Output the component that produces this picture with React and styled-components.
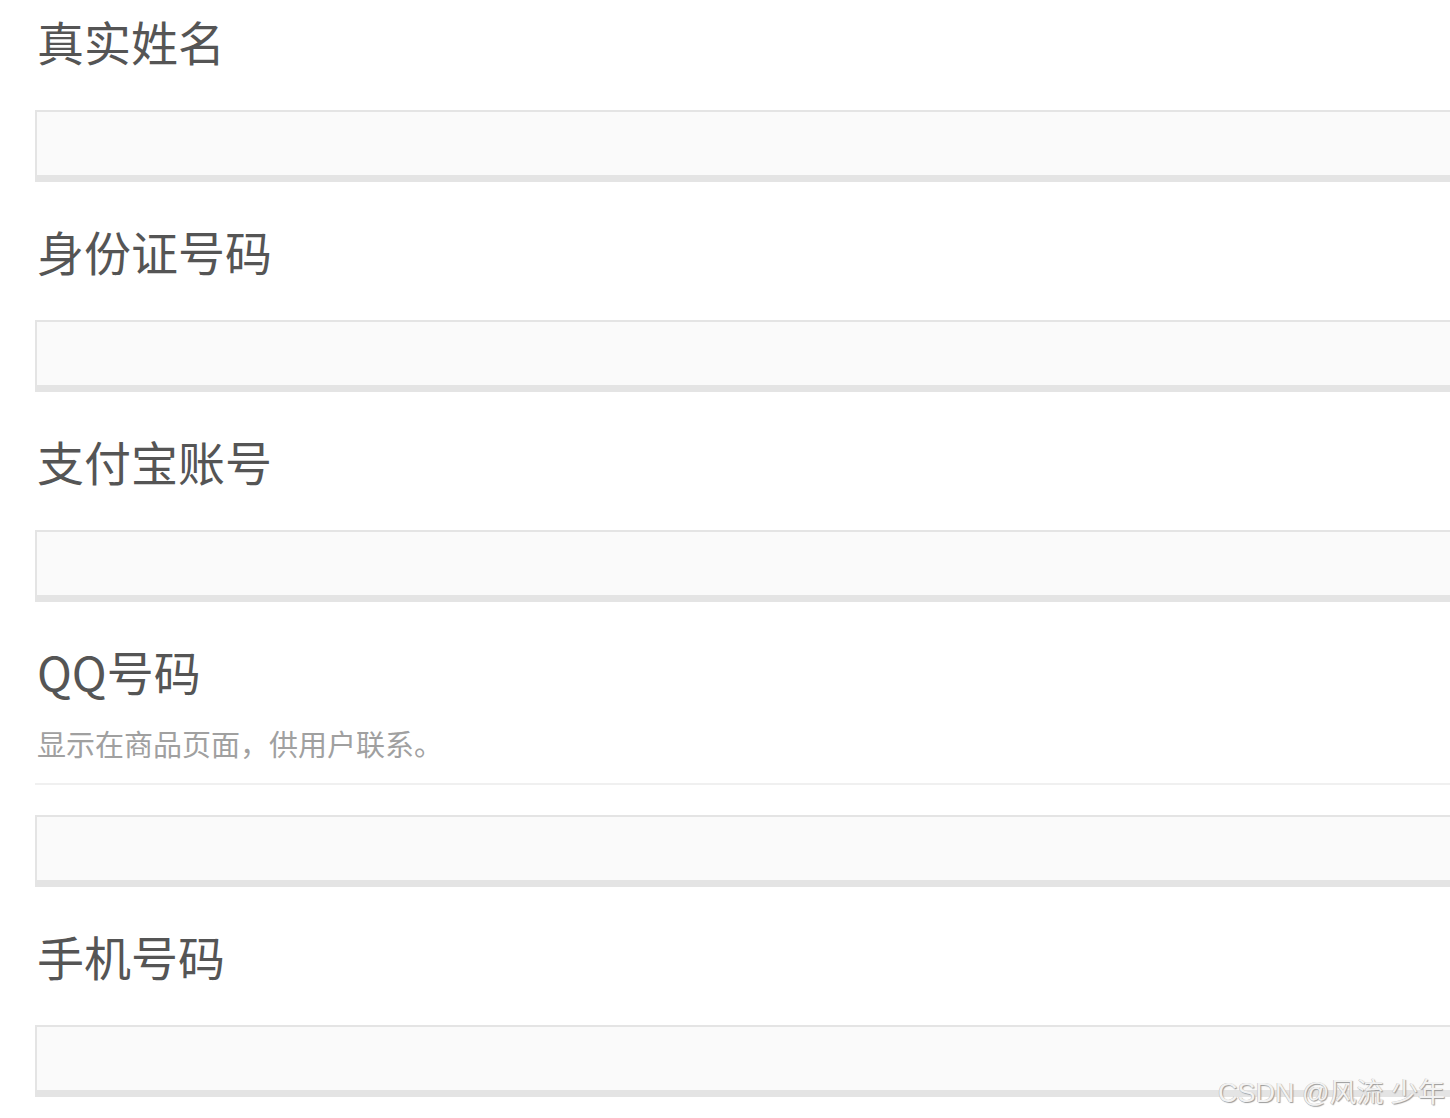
import React from 'react';
import styled, { createGlobalStyle } from 'styled-components';

const GlobalStyle = createGlobalStyle`
	html, body {
		margin: 0;
		padding: 0;
		background: #fff;
		overflow: hidden;
	}
	body {
		font-family: "Noto Sans CJK SC", "Noto Sans", sans-serif;
	}
`;

const fields = [
	{ label: '真实姓名' },
	{ label: '身份证号码' },
	{ label: '支付宝账号' },
	{ label: 'QQ号码', help: '显示在商品页面，供用户联系。' },
	{ label: '手机号码' },
];

export default function App() {
	return (
		<Page>
			<GlobalStyle />
			<Form>
				{fields.map((f) => (
					<Field key={f.label}>
						<Label>{f.label}</Label>
						{f.help && (
							<>
								<Help>{f.help}</Help>
								<Divider />
							</>
						)}
						<Input type="text" $spaced={!f.help} />
					</Field>
				))}
			</Form>
			<Watermark>CSDN @风流 少年</Watermark>
		</Page>
	);
}

const Page = styled.div`
	position: relative;
	width: 1450px;
	height: 1118px;
	overflow: hidden;
`;

const Form = styled.form`
	display: flex;
	flex-direction: column;
	padding: 13px 0 0 35px;
	gap: 41px;
`;

const Field = styled.div`
	display: flex;
	flex-direction: column;
`;

const Label = styled.label`
	font-size: 47px;
	line-height: 56px;
	color: #555;
	padding-left: 2px;
`;

const Help = styled.div`
	margin-top: 24px;
	font-size: 29px;
	line-height: 40px;
	color: #a0a0a0;
	padding-left: 2px;
`;

const Divider = styled.div`
	margin-top: 20px;
	height: 2px;
	width: 1450px;
	background: #f0f0f0;
`;

const Input = styled.input`
	box-sizing: border-box;
	margin-top: ${(p) => (p.$spaced ? '41px' : '30px')};
	width: 1440px;
	height: 72px;
	background: #fafafa;
	border: 2px solid #e4e4e4;
	border-bottom-width: 7px;
	border-right: none;
	outline: none;
	padding: 0 16px;
	font-size: 28px;
`;

const Watermark = styled.div`
	position: absolute;
	right: 5px;
	bottom: 8px;
	font-family: "Liberation Sans", "Noto Sans CJK SC", sans-serif;
	font-size: 27px;
	color: #f2f2f2;
	text-shadow: 1px 1px 1px #9a9a9a, -0.5px -0.5px 0.5px #bbb;
	letter-spacing: 0;
	white-space: nowrap;
`;
